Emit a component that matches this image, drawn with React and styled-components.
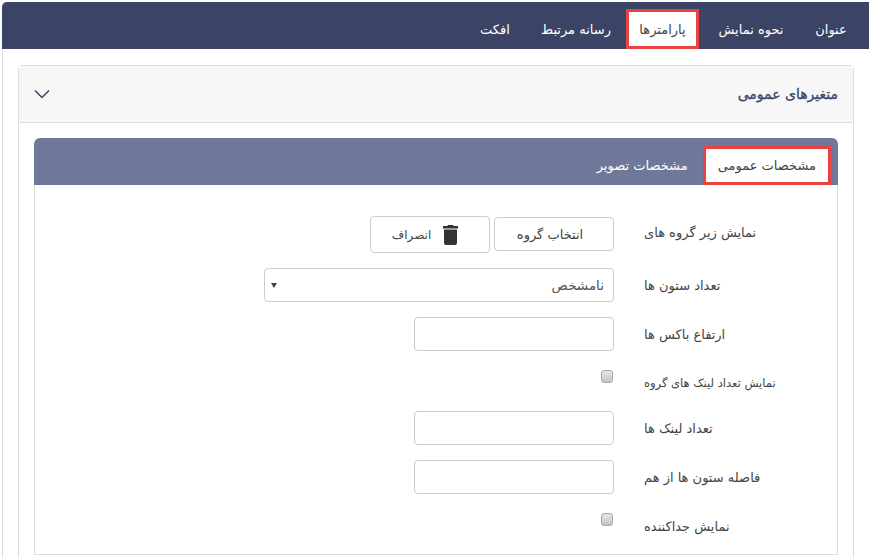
import React from "react";
import styled, { createGlobalStyle } from "styled-components";

const GlobalStyle = createGlobalStyle`
  html, body {
    margin: 0;
    padding: 0;
    background: #fff;
  }
  body {
    font-family: "DejaVu Sans", "Noto Sans", sans-serif;
    color: #444;
  }
`;

const NAV_ITEMS = [
  { title: "عنوان", width: 60 },
  { title: "نحوه نمایش", width: 100 },
  { title: "پارامترها", width: 73, active: true },
  { title: "رسانه مرتبط", width: 96 },
  { title: "افکت", width: 66 },
];

const FORM_ROWS = [
  { label: "نمایش زیر گروه های", type: "buttons", height: 37 },
  { label: "تعداد ستون ها", type: "select", height: 34 },
  { label: "ارتفاع باکس ها", type: "input", height: 34 },
  { label: "نمایش تعداد لینک های گروه", type: "check", height: 30, size: 11.5 },
  { label: "تعداد لینک ها", type: "input", height: 34 },
  { label: "فاصله ستون ها از هم", type: "input", height: 34 },
  { label: "نمایش جداکننده", type: "check", height: 32 },
];

const TrashIcon = () => (
  <svg width="15" height="20" viewBox="0 0 15 20">
    <path
      fill="#333"
      d="M5 0h5l.5 1H15v2.500H0V1h4.500zM1 4.500h13V18a2 2 0 0 1-2 2H3a2 2 0 0 1-2-2z"
    />
  </svg>
);

const ChevronIcon = () => (
  <svg width="16" height="10" viewBox="0 0 16 10">
    <path d="M1 1.500 8 8.500 15 1.500" fill="none" stroke="#3b4465" strokeWidth="1.500" />
  </svg>
);

const App = () => {
  const renderControl = (row) => {
    if (row.type === "buttons") {
      return (
        <ButtonGroup>
          <GroupButton>انتخاب گروه</GroupButton>
          <CancelButton>
            <TrashIcon />
            انصراف
          </CancelButton>
        </ButtonGroup>
      );
    }
    if (row.type === "select") {
      return (
        <SelectWrap>
          <Select defaultValue="none">
            <option value="none">نامشخص</option>
          </Select>
        </SelectWrap>
      );
    }
    if (row.type === "check") {
      return <CheckBox type="checkbox" />;
    }
    return <TextInput type="text" />;
  };

  return (
    <>
      <GlobalStyle />
      <Page dir="rtl">
        <NavBar>
          {NAV_ITEMS.map((item) => (
            <NavItem key={item.title} $active={item.active} $width={item.width}>
              {item.title}
            </NavItem>
          ))}
        </NavBar>
        <Body>
          <Panel>
            <PanelHeader>
              <PanelTitle>متغیرهای عمومی</PanelTitle>
              <ChevronIcon />
            </PanelHeader>
            <PanelBody>
              <TabBar>
                <TabItem $active>مشخصات عمومی</TabItem>
                <TabItem>مشخصات تصویر</TabItem>
              </TabBar>
              <TabContent>
                {FORM_ROWS.map((row) => (
                  <FormRow key={row.label} $height={row.height}>
                    <RowLabel $type={row.type} $size={row.size}>
                      {row.label}
                    </RowLabel>
                    {renderControl(row)}
                  </FormRow>
                ))}
              </TabContent>
            </PanelBody>
          </Panel>
        </Body>
      </Page>
    </>
  );
};

export default App;

const Page = styled.div`
  height: 558px;
  box-sizing: border-box;
  padding: 2px 0 0 2px;
  overflow: hidden;
`;

const NavBar = styled.ul`
  display: flex;
  align-items: flex-end;
  height: 47px;
  margin: 0;
  padding: 0 8px 0 0;
  list-style: none;
  background: #3b4465;
  border-radius: 5px 0 0 0;
`;

const NavItem = styled.li`
  display: flex;
  align-items: center;
  justify-content: center;
  box-sizing: border-box;
  width: ${(p) => p.$width}px;
  height: 40px;
  margin: ${(p) => (p.$active ? "0 2px" : "0")};
  font-size: 13px;
  color: ${(p) => (p.$active ? "#444" : "#fff")};
  background: ${(p) => (p.$active ? "#fff" : "transparent")};
  border: ${(p) => (p.$active ? "3px solid #e8433f" : "3px solid transparent")};
`;

const Body = styled.div`
  padding: 16px 15px 0 15px;
  border-left: 1px solid #ddd;
`;

const Panel = styled.div`
  border: 1px solid #ddd;
  border-radius: 4px 4px 0 0;
`;

const PanelHeader = styled.div`
  display: flex;
  align-items: center;
  justify-content: space-between;
  box-sizing: border-box;
  height: 57px;
  padding: 0 15px 0 15px;
  background: #f7f7f7;
  border-bottom: 1px solid #ddd;
`;

const PanelTitle = styled.h3`
  margin: 0;
  font-size: 14px;
  font-weight: 400;
  color: #3b4465;
  -webkit-text-stroke: 0.3px #3b4465;
`;

const PanelBody = styled.div`
  padding: 15px;
`;

const TabBar = styled.div`
  display: flex;
  align-items: flex-end;
  height: 47px;
  padding: 0 7px;
  background: #6f7899;
  border-radius: 6px 6px 0 0;
`;

const TabItem = styled.div`
  display: flex;
  align-items: center;
  box-sizing: border-box;
  height: 39px;
  padding: 0 12px;
  font-size: 13px;
  color: ${(p) => (p.$active ? "#444" : "#fff")};
  background: ${(p) => (p.$active ? "#fff" : "transparent")};
  border: ${(p) => (p.$active ? "3px solid #e8433f" : "3px solid transparent")};
`;

const TabContent = styled.div`
  display: flex;
  flex-direction: column;
  gap: 15px;
  padding: 31px 0 13px;
  border: 1px solid #ddd;
  border-top: 0;
`;

const FormRow = styled.div`
  display: grid;
  grid-template-columns: 193px 1fr;
  column-gap: 30px;
  align-items: center;
  justify-items: start;
  min-height: ${(p) => p.$height}px;
`;

const RowLabel = styled.label`
  width: 100%;
  font-size: ${(p) => p.$size || 13}px;
  color: #444;
  text-align: left;
  ${(p) => p.$type === "check" && "padding-top: 3px;"}
  ${(p) => p.$type === "buttons" && "padding-bottom: 5px;"}
`;

const ButtonGroup = styled.div`
  display: flex;
  align-items: flex-start;
  gap: 4px;
`;

const GroupButton = styled.button`
  display: flex;
  align-items: center;
  justify-content: center;
  box-sizing: border-box;
  width: 120px;
  height: 34px;
  margin-top: 1px;
  padding: 0 8px 0 0;
  font: inherit;
  font-size: 13px;
  color: #444;
  background: #fff;
  border: 1px solid #ccc;
  border-radius: 4px;
`;

const CancelButton = styled(GroupButton)`
  gap: 12px;
  height: 37px;
  margin-top: 0;
  padding: 0 10px 0 0;
  font-size: 12px;
`;

const SelectWrap = styled.div`
  position: relative;

  &::after {
    content: "";
    position: absolute;
    left: 7px;
    top: 15px;
    border-style: solid;
    border-width: 5px 3px 0;
    border-color: #444 transparent transparent;
  }
`;

const Select = styled.select`
  display: block;
  appearance: none;
  box-sizing: border-box;
  width: 350px;
  height: 34px;
  padding: 0 9px;
  font: inherit;
  font-size: 13.5px;
  color: #555;
  background: #fff;
  border: 1px solid #ccc;
  border-radius: 4px;
`;

const TextInput = styled.input`
  box-sizing: border-box;
  width: 200px;
  height: 34px;
  padding: 0 10px;
  background: #fff;
  border: 1px solid #ccc;
  border-radius: 4px;
`;

const CheckBox = styled.input`
  appearance: none;
  align-self: start;
  box-sizing: border-box;
  width: 12px;
  height: 13px;
  margin: 4px 1px 0 0;
  background: linear-gradient(#e6e6e6, #c4c4c4);
  border: 1px solid #a9a9a9;
  border-radius: 3px;
`;
